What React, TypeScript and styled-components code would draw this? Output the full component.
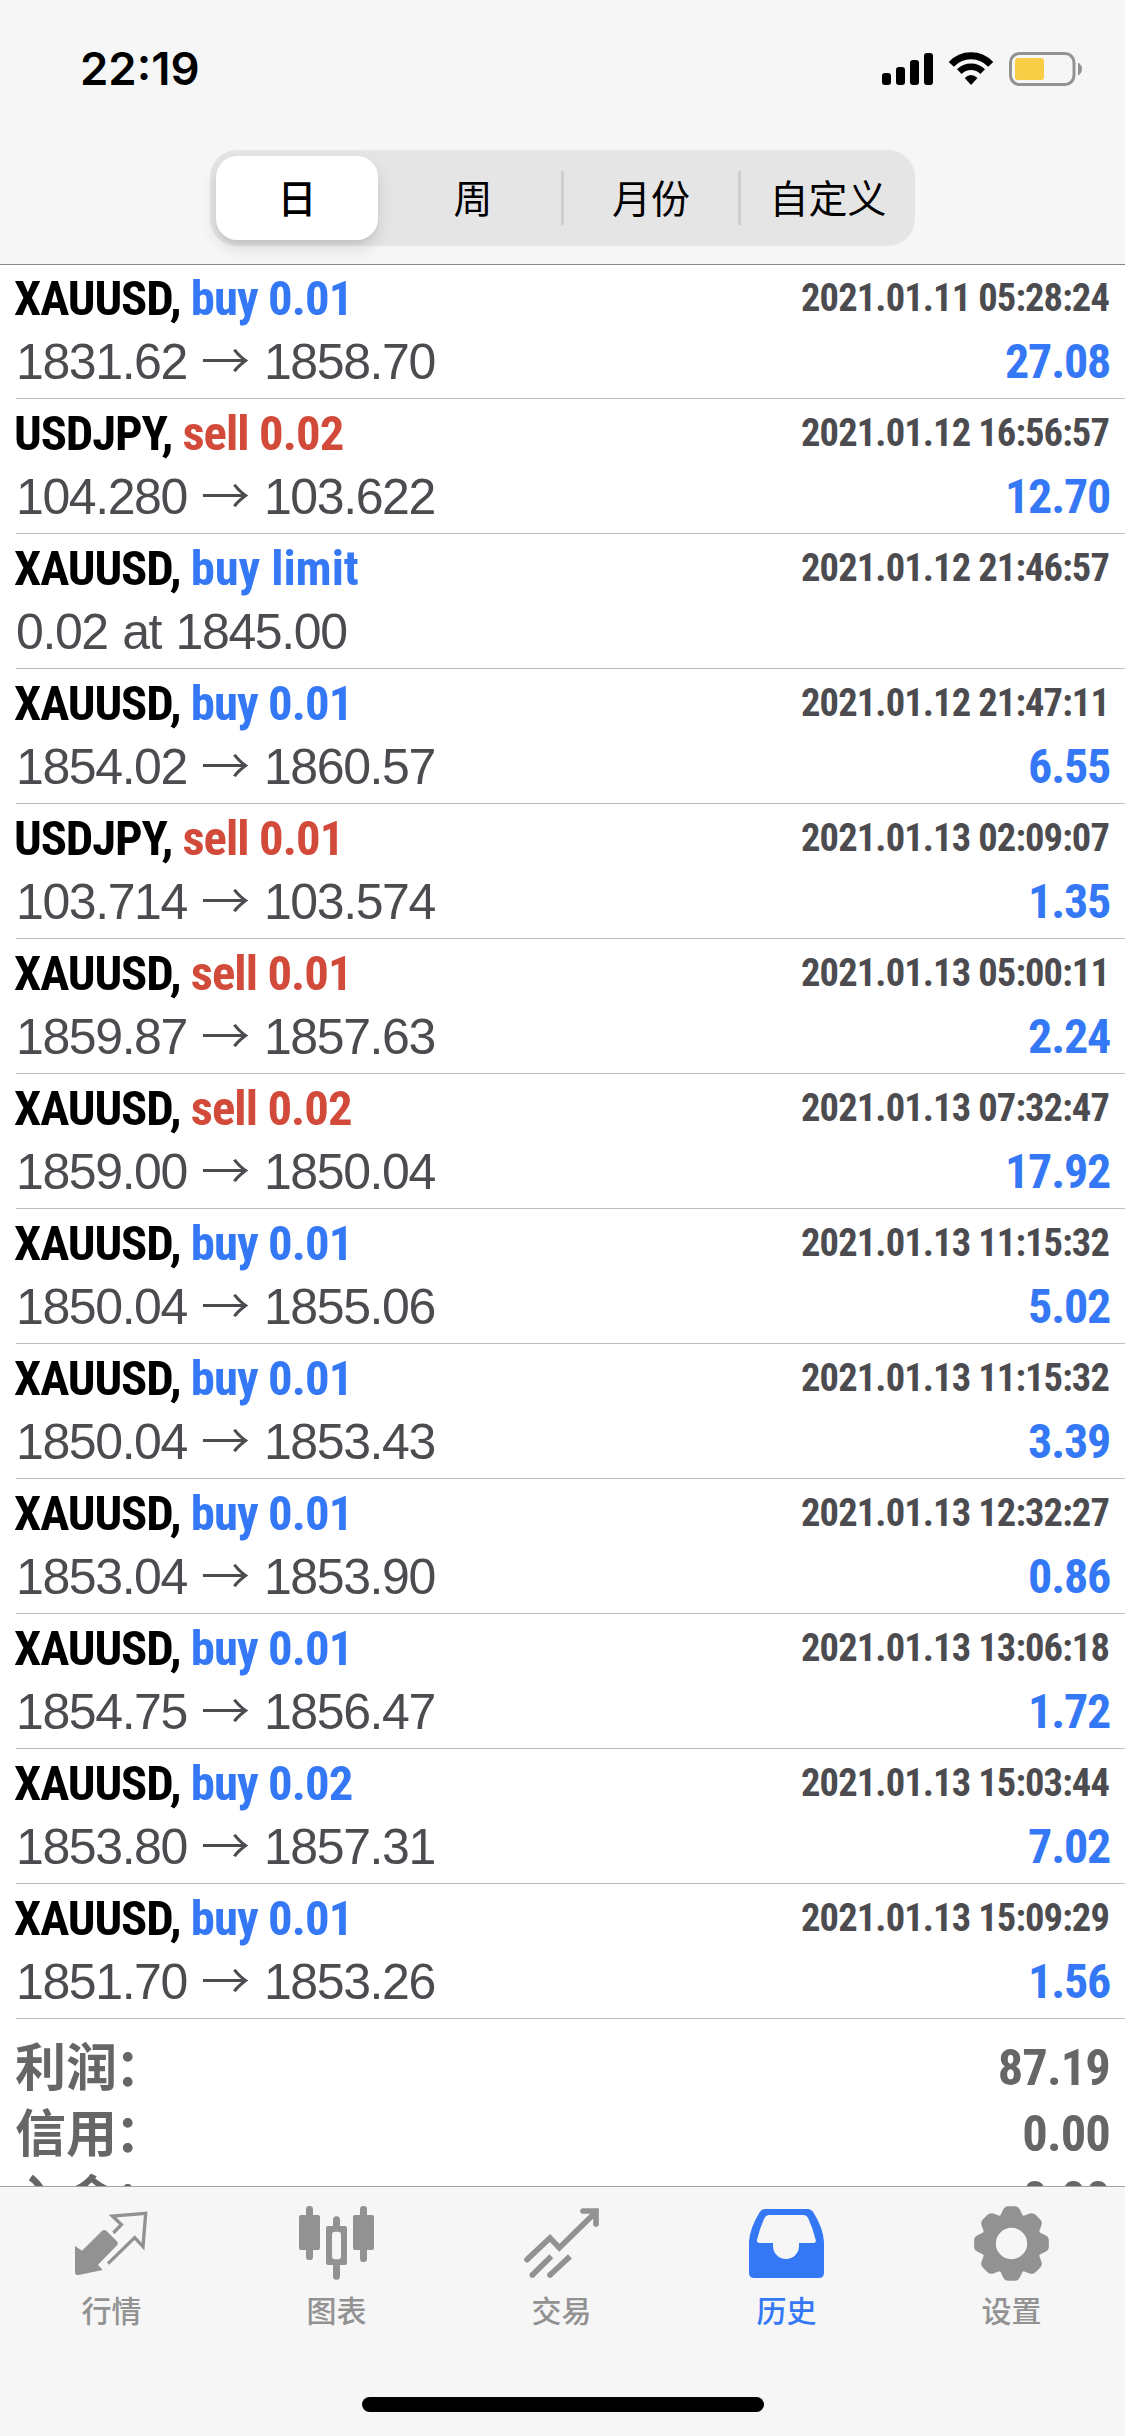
import React from 'react';
import styled, { createGlobalStyle } from 'styled-components';

const Global = createGlobalStyle`
  * { box-sizing: border-box; }
  body { margin: 0; background: #fff; }
`;

const CJK = `"Noto Sans CJK SC", sans-serif`;
const BLUE = '#3478f6';
const RED = '#d24b3a';

const Screen = styled.div`
  width: 1125px;
  height: 2436px;
  display: flex;
  flex-direction: column;
  overflow: hidden;
  background: #fff;
`;

const Header = styled.header`
  position: relative;
  z-index: 1;
  height: 264px;
  flex: none;
  display: flex;
  flex-direction: column;
  align-items: center;
  background: #f6f6f6;
  box-shadow: 0 1px 0 #868686;
`;

const StatusBar = styled.div`
  width: 100%;
  height: 150px;
  display: flex;
  justify-content: space-between;
  padding: 42px 44px 0 80px;
`;

const Clock = styled.div`
  font: 600 45.500px/54px Inter, sans-serif;
  letter-spacing: 0;
  color: #000;
`;

const StatusIcons = styled.svg`
  width: 204px;
  height: 40px;
  margin-top: 8px;
  overflow: visible;
`;

const Segments = styled.nav`
  width: 705px;
  height: 96px;
  display: flex;
  align-items: center;
  padding: 6px 0 6px 6px;
  border-radius: 27px;
  background: #e5e5e6;
`;

const Segment = styled.button<{ $active?: boolean; $width: number; $divider?: boolean }>`
  flex: none;
  width: ${(p) => p.$width}px;
  height: ${(p) => (p.$active ? 84 : 54)}px;
  margin-right: ${(p) => (p.$active ? 7 : 0)}px;
  padding: 0 0 4px;
  border: 0;
  border-left: ${(p) => (p.$divider ? '3px solid #cfcfd1' : '0')};
  border-radius: ${(p) => (p.$active ? '21px' : '0')};
  background: ${(p) => (p.$active ? '#fff' : 'transparent')};
  box-shadow: ${(p) => (p.$active ? '0 8px 16px rgba(0,0,0,.12), 0 3px 3px rgba(0,0,0,.04)' : 'none')};
  font: ${(p) => (p.$active ? 500 : 400)} 39px/50px ${CJK};
  color: #000;
`;

const List = styled.main`
  height: 1922px;
  flex: none;
  overflow: hidden;
`;

const Deal = styled.article`
  height: 135px;
  margin-left: 16px;
  padding-right: 16px;
  border-bottom: 1px solid #bdbdbf;
`;

const Line = styled.div`
  height: 66px;
  display: flex;
  justify-content: space-between;
  align-items: flex-start;
  white-space: pre;
`;

const Condensed = styled.span`
  font-family: Roboto, "Liberation Sans", sans-serif;
  font-weight: 700;
  font-stretch: 75%;
`;

const Title = styled(Condensed)`
  margin-left: -2px;
  font-size: 48.700px;
  line-height: 69px;
  letter-spacing: -1.100px;
  color: #000;
`;

const Side = styled.span<{ $color: string; $gap: number }>`
  letter-spacing: ${(p) => p.$gap}px;
  color: ${(p) => p.$color};
`;

const Time = styled(Condensed)`
  font-size: 38.500px;
  line-height: 68px;
  letter-spacing: -0.880px;
  color: #4c4c50;
`;

const Profit = styled(Condensed)`
  margin-right: -1px;
  font-size: 48px;
  line-height: 63px;
  letter-spacing: -1.200px;
  color: ${BLUE};
`;

const Prices = styled.span`
  font: 400 50px/64px "Liberation Sans", sans-serif;
  letter-spacing: -1.400px;
  word-spacing: 2px;
  color: #4c4c50;
`;

const Arrow = styled.span`
  display: inline-block;
  width: 77px;
  text-align: center;
  letter-spacing: 0;
  font: 350 49px/40px ${CJK};
`;

const Totals = styled.section`
  padding: 12px 16px 0;
`;

const Total = styled.div`
  height: 66px;
  display: flex;
  justify-content: space-between;
  align-items: flex-start;
`;

const TotalLabel = styled.span`
  margin-left: -1px;
  font: 700 51px/66px ${CJK};
  color: #666;
`;

const Colon = styled.span`
  margin-left: -2px;
`;

const TotalValue = styled(Condensed)`
  margin-right: -1px;
  font-size: 50.500px;
  line-height: 74px;
  letter-spacing: -0.900px;
  color: #666;
`;

const TabBar = styled.footer`
  height: 250px;
  flex: none;
  display: flex;
  flex-direction: column;
  align-items: center;
  background: #f6f6f6;
  border-top: 1px solid #a4a4a4;
`;

const Tabs = styled.nav`
  width: 100%;
  height: 210px;
  display: flex;
`;

const Tab = styled.button<{ $active?: boolean }>`
  width: 225px;
  padding: 18px 2px 0 0;
  border: 0;
  background: none;
  display: flex;
  flex-direction: column;
  align-items: center;
  color: ${(p) => (p.$active ? BLUE : '#929292')};
  font: 500 30px/44px ${CJK};
`;

const TabIcon = styled.svg`
  width: 75px;
  height: 76px;
  margin-bottom: 6px;
  display: block;
  overflow: visible;
  fill: currentColor;
`;

const HomeIndicator = styled.div`
  width: 402px;
  height: 15px;
  border-radius: 8px;
  background: #000;
`;

type Row = [symbol: string, side: string, time: string, from: string, to: string, profit: string];

const rows: Row[] = [
  ['XAUUSD', 'buy 0.01', '2021.01.11 05:28:24', '1831.62', '1858.70', '27.08'],
  ['USDJPY', 'sell 0.02', '2021.01.12 16:56:57', '104.280', '103.622', '12.70'],
  ['XAUUSD', 'buy limit', '2021.01.12 21:46:57', '0.02 at 1845.00', '', ''],
  ['XAUUSD', 'buy 0.01', '2021.01.12 21:47:11', '1854.02', '1860.57', '6.55'],
  ['USDJPY', 'sell 0.01', '2021.01.13 02:09:07', '103.714', '103.574', '1.35'],
  ['XAUUSD', 'sell 0.01', '2021.01.13 05:00:11', '1859.87', '1857.63', '2.24'],
  ['XAUUSD', 'sell 0.02', '2021.01.13 07:32:47', '1859.00', '1850.04', '17.92'],
  ['XAUUSD', 'buy 0.01', '2021.01.13 11:15:32', '1850.04', '1855.06', '5.02'],
  ['XAUUSD', 'buy 0.01', '2021.01.13 11:15:32', '1850.04', '1853.43', '3.39'],
  ['XAUUSD', 'buy 0.01', '2021.01.13 12:32:27', '1853.04', '1853.90', '0.86'],
  ['XAUUSD', 'buy 0.01', '2021.01.13 13:06:18', '1854.75', '1856.47', '1.72'],
  ['XAUUSD', 'buy 0.02', '2021.01.13 15:03:44', '1853.80', '1857.31', '7.02'],
  ['XAUUSD', 'buy 0.01', '2021.01.13 15:09:29', '1851.70', '1853.26', '1.56'],
];

const totals = [
  ['利润', '87.19'],
  ['信用', '0.00'],
  ['入金', '0.00'],
];

const gearPath = (() => {
  const pts: string[] = [];
  for (let i = 0; i < 8; i++) {
    const a = (i * Math.PI) / 4;
    const rot = (x: number, y: number) =>
      `${(454.5 + x * Math.cos(a) - y * Math.sin(a)).toFixed(1)} ${(190.5 + x * Math.sin(a) + y * Math.cos(a)).toFixed(1)}`;
    pts.push(
      `${i ? 'L' : 'M'}${rot(-33, -85)} L${rot(-25, -102)} Q${rot(-20, -112)} ${rot(-10, -112)} L${rot(10, -112)} Q${rot(20, -112)} ${rot(25, -102)} L${rot(33, -85)}`,
    );
  }
  return pts.join(' ') + 'Z M407.5 190.5a47 47 0 1 0 94 0a47 47 0 1 0 -94 0Z';
})();

const QuotesIcon = () => (
  <TabIcon viewBox="102 75 225 228">
    <path d="M105 198L126 212L186 153Q193 147 200 153L232 185Q236 190 231 196L174 254L188 270L116 285Q105 287 105 275Z" />
    <path d="M220 159L244 134L217 108L317 100L309 200L284 173L204 251" fill="none" stroke="currentColor" strokeWidth="10" />
  </TabIcon>
);

const ChartIcon = () => (
  <TabIcon viewBox="777 75 225 228">
    <rect x="777" y="105" width="63" height="105" rx="6" />
    <rect x="798" y="78" width="21" height="162" rx="10" />
    <rect x="939" y="105" width="63" height="105" rx="6" />
    <rect x="960" y="78" width="21" height="168" rx="10" />
    <path fillRule="evenodd" d="M864 138H879V119a10.500 10.500 0 0 1 21 0V138H915q6 0 6 6V249q0 6 -6 6H900V289a10.500 10.500 0 0 1 -21 0V255H864q-6 0 -6-6V144q0-6 6-6ZM885 155q-9 0-9 9V229q0 9 9 9h9q9 0 9-9V164q0-9-9-9Z" />
  </TabIcon>
);

const TradeIcon = () => (
  <TabIcon viewBox="132 75 225 228">
    <g fill="none" stroke="currentColor" strokeWidth="17">
      <path d="M141 239L210 174L238 203L347 97" strokeLinecap="round" />
      <path d="M309 93H348V132" strokeLinecap="round" />
      <path d="M157 285L214 229M210 285L270 229" />
    </g>
    <circle cx="157" cy="285" r="8.500" />
    <circle cx="210" cy="285" r="8.500" />
  </TabIcon>
);

const HistoryIcon = () => (
  <TabIcon viewBox="807 75 225 228">
    <path fillRule="evenodd" d="M856 87H982Q994 87 1001 98Q1030 145 1032 186V278Q1032 294 1016 294H823Q807 294 807 278V186Q809 145 838 98Q844 87 856 87ZM867 105Q858 105 854 113Q840 143 831 179Q829 189 838 189H879V198a39 39 0 0 0 78 0V189H1000Q1010 189 1007 179Q998 143 984 113Q980 105 971 105Z" />
  </TabIcon>
);

const SettingsIcon = () => (
  <TabIcon viewBox="342 75 225 228">
    <path fillRule="evenodd" d={gearPath} />
  </TabIcon>
);

const tabs = [
  { label: '行情', Icon: QuotesIcon },
  { label: '图表', Icon: ChartIcon },
  { label: '交易', Icon: TradeIcon },
  { label: '历史', Icon: HistoryIcon, active: true },
  { label: '设置', Icon: SettingsIcon },
];

const DealRow = ({ row }: { row: Row }) => {
  const [symbol, side, time, from, to, profit] = row;
  return (
    <Deal>
      <Line>
        <Title>
          {symbol},{' '}
          <Side $color={side.startsWith('buy') ? BLUE : RED} $gap={side.endsWith('limit') ? -0.1 : -0.9}>
            {side}
          </Side>
        </Title>
        <Time>{time}</Time>
      </Line>
      <Line>
        <Prices>
          {from}
          {to && <Arrow>→</Arrow>}
          {to}
        </Prices>
        {profit && <Profit>{profit}</Profit>}
      </Line>
    </Deal>
  );
};

export default function App() {
  return (
    <Screen>
      <Global />
      <Header>
        <StatusBar>
          <Clock>22:19</Clock>
          <StatusIcons viewBox="877 50 204 40">
            <rect x="882" y="73" width="9" height="12" rx="3" />
            <rect x="896" y="67" width="9" height="18" rx="3" />
            <rect x="910" y="60" width="9" height="25" rx="3" />
            <rect x="924" y="53" width="9" height="32" rx="3" />
            <g fill="none" stroke="#000">
              <path d="M951.3 64.3A26.800 26.800 0 0 1 990.7 64.3" strokeWidth="7" />
              <path d="M959.3 71.6A16.500 16.500 0 0 1 982.7 71.6" strokeWidth="6.500" />
            </g>
            <path d="M964.700 78Q971 72 977.500 78L971 85Z" />
            <rect x="1010.500" y="53.500" width="63.500" height="31" rx="9" fill="none" stroke="#929292" strokeWidth="3" />
            <rect x="1015" y="58" width="29" height="22" rx="3" fill="#f7ce46" />
            <path d="M1078 62.500Q1082 65 1082 69T1078 75.500Z" fill="#929292" />
          </StatusIcons>
        </StatusBar>
        <Segments>
          <Segment $active $width={162}>日</Segment>
          <Segment $width={176}>周</Segment>
          <Segment $width={177} $divider>月份</Segment>
          <Segment $width={177} $divider>自定义</Segment>
        </Segments>
      </Header>
      <List>
        {rows.map((row) => (
          <DealRow key={row[2] + row[4]} row={row} />
        ))}
        <Totals>
          {totals.map(([label, value]) => (
            <Total key={label}>
              <TotalLabel>{label}<Colon>：</Colon></TotalLabel>
              <TotalValue>{value}</TotalValue>
            </Total>
          ))}
        </Totals>
      </List>
      <TabBar>
        <Tabs>
          {tabs.map(({ label, Icon, active }) => (
            <Tab key={label} $active={active}>
              <Icon />
              {label}
            </Tab>
          ))}
        </Tabs>
        <HomeIndicator />
      </TabBar>
    </Screen>
  );
}
